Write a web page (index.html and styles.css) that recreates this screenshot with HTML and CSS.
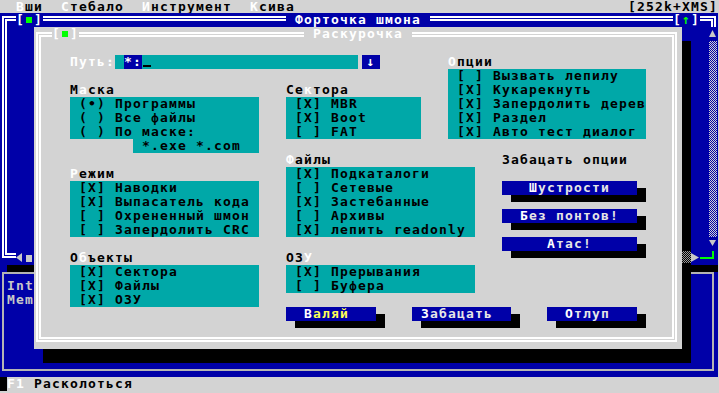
FILE: index.html
```html
<!DOCTYPE html>
<html lang="ru">
<head>
    <meta charset="UTF-8">
    <meta name="viewport" content="width=device-width, initial-scale=1.0">
    <title>Раскурочка</title>
    <link rel="stylesheet" href="styles.css">
</head>
<body>
<div class="screen">
    <div class="menubar">
        <span class="menu-items">  <span class="hot">В</span>ши  <span class="hot">С</span>тебало  <span class="hot">И</span>нструмент  <span class="hot">К</span>сива</span>
        <span class="memory">[252k+XMS]</span>
    </div>

    <div class="log-window">
        <div class="log-frame"></div>
        <div class="log-shadow"></div>
        <div class="log-int">Int</div>
        <div class="log-mem">Mem</div>
    </div>

    <div class="scan-window">
        <div class="frame scan-frame"></div>
        <div class="scan-close">[<span class="box-mark"></span>]</div>
        <div class="scan-title"> Форточка шмона </div>
        <div class="scan-zoom">[<span class="green">↑</span>]</div>
        <div class="vscroll">
            <span class="arrow arrow-up"></span>
            <span class="track"></span>
            <span class="arrow arrow-down"></span>
        </div>
        <div class="hscroll">
            <span class="arrow arrow-left"></span>
            <span class="thumb"></span>
        </div>
        <div class="hscroll-end"><span class="arrow arrow-right"></span></div>
        <div class="grip"></div>
    </div>

    <div class="dialog">
        <div class="frame dialog-frame"></div>
        <div class="dlg-close">[<span class="box-mark"></span>]</div>
        <div class="dlg-title"> Раскурочка </div>

        <div class="label path-label">Путь:</div>
        <div class="input path-input"> <span class="sel">*:</span><span class="cursor"></span></div>
        <div class="history"><span>↓</span></div>

        <div class="label options-label"><span class="hot">О</span>пции</div>
        <div class="cluster options-box">
            <div> [ ] Вызвать лепилу</div>
            <div> [X] Кукарекнуть</div>
            <div> [X] Запердолить дерев</div>
            <div> [X] Раздел</div>
            <div> [X] Авто тест диалог</div>
        </div>

        <div class="label mask-label">М<span class="hot">а</span>ска</div>
        <div class="cluster mask-box">
            <div> (•) Программы</div>
            <div> ( ) Все файлы</div>
            <div> ( ) По маске:</div>
        </div>
        <div class="input mask-input"> *.exe *.com</div>

        <div class="label sectors-label">Се<span class="hot">к</span>тора</div>
        <div class="cluster sectors-box">
            <div> [X] MBR</div>
            <div> [X] Boot</div>
            <div> [ ] FAT</div>
        </div>

        <div class="label files-label"><span class="hot">Ф</span>айлы</div>
        <div class="cluster files-box">
            <div> [X] Подкаталоги</div>
            <div> [ ] Сетевые</div>
            <div> [X] Застебанные</div>
            <div> [ ] Архивы</div>
            <div> [X] лепить readonly</div>
        </div>

        <div class="label extra-label">Забацать опции</div>
        <div class="btn btn-fast">   <span class="hot">Ш</span>устрости</div>
        <div class="btn btn-plain">  <span class="hot">Б</span>ез понтов!</div>
        <div class="btn btn-alarm">     <span class="hot">А</span>тас!</div>

        <div class="label mode-label"><span class="hot">Р</span>ежим</div>
        <div class="cluster mode-box">
            <div> [X] Наводки</div>
            <div> [X] Выпасатель кода</div>
            <div> [ ] Охрененный шмон</div>
            <div> [ ] Запердолить CRC</div>
        </div>

        <div class="label objects-label">О<span class="hot">б</span>ъекты</div>
        <div class="cluster objects-box">
            <div> [X] Сектора</div>
            <div> [X] Файлы</div>
            <div> [X] ОЗУ</div>
        </div>

        <div class="label ram-label">ОЗ<span class="hot">У</span></div>
        <div class="cluster ram-box">
            <div> [X] Прерывания</div>
            <div> [ ] Буфера</div>
        </div>

        <div class="btn btn-default btn-go">  <span class="hot">В</span>аляй</div>
        <div class="btn btn-apply"> <span class="hot">З</span>абацать</div>
        <div class="btn btn-cancel">  <span class="hot">О</span>тлуп</div>
    </div>

    <div class="shade-track"></div>

    <div class="statusbar"><span class="mouse"></span><span class="hot">F1</span> Расколоться</div>
</div>
</body>
</html>
```

FILE: styles.css
```css
body {
    margin: 0;
    background-color: #d3d3d3;
    overflow: hidden;
    font-family: "DejaVu Sans Mono", "Liberation Mono", monospace;
    font-size: 13px;
    font-weight: bold;
    line-height: 14px;
    letter-spacing: 1.17px;
    color: #000;
}
.screen {
    display: grid;
    grid-template-columns: repeat(80, 9px);
    grid-template-rows: 13px repeat(27, 14px);
    margin-left: -2px;
}
.hot {
    color: #fff;
}
.green {
    color: #00ff00;
}

/* top menu */
.menubar {
    grid-area: 1 / 1 / 2 / -1;
    display: flex;
    justify-content: space-between;
    background-color: #d3d3d3;
    line-height: 13px;
}
.menu-items,
.memory {
    white-space: pre;
}

/* window in the back */
.log-window {
    grid-area: 20 / 1 / 28 / -1;
    display: grid;
    grid-template-columns: repeat(80, 9px);
    grid-template-rows: repeat(8, 14px);
    background-color: #0000a8;
    color: #c8c8c8;
}
.log-frame {
    grid-area: 1 / 1 / -1 / -1;
    margin: 7px 4px 6px 4px;
    border: 2px solid #b4b4b4;
}
.log-shadow {
    grid-area: 1 / 2 / 2 / -1;
    height: 7px;
    background-color: #000;
}
.log-int {
    grid-area: 2 / 2 / 3 / 5;
}
.log-mem {
    grid-area: 3 / 2 / 4 / 5;
}

/* blue window */
.scan-window {
    grid-area: 2 / 1 / 20 / -1;
    display: grid;
    grid-template-columns: repeat(80, 9px);
    grid-template-rows: repeat(18, 14px);
    background-color: #0000a8;
    color: #fff;
}
.frame {
    grid-area: 1 / 1 / -1 / -1;
    border: 5px double #fff;
}
.scan-frame {
    margin: 3px 2px 7px 4px;
}
.scan-close,
.scan-title,
.scan-zoom {
    background-color: #0000a8;
    white-space: pre;
}
.scan-close {
    grid-area: 1 / 3 / 2 / 6;
}
.scan-title {
    grid-area: 1 / 33 / 2 / 49;
}
.scan-zoom {
    grid-area: 1 / 76 / 2 / 79;
}
.box-mark {
    display: inline-block;
    width: 9px;
    height: 14px;
    vertical-align: top;
    background: linear-gradient(#00ff00, #00ff00) 1px 4px / 6px 6px no-repeat;
}
.vscroll {
    grid-area: 2 / 80 / 18 / 81;
    display: flex;
    flex-direction: column;
    background-color: #0000a8;
}
.arrow {
    display: block;
    background-color: #c8c8c8;
}
.arrow-up {
    width: 7px;
    height: 7px;
    margin: 3px 0 4px;
    clip-path: polygon(50% 0, 100% 100%, 0 100%);
}
.arrow-down {
    width: 7px;
    height: 6px;
    margin: 3px 0 5px;
    clip-path: polygon(0 0, 100% 0, 50% 100%);
}
.track {
    flex: 1;
    width: 8px;
    background: repeating-conic-gradient(#d3d3d3 0 25%, #0000a8 0 50%) 0 0 / 2px 2px;
}
.hscroll {
    grid-area: 18 / 3 / 19 / 5;
    display: flex;
    align-items: flex-start;
    background-color: #0000a8;
}
.arrow-left {
    width: 6px;
    height: 9px;
    margin: 2px 3px 0 0;
    clip-path: polygon(0 50%, 100% 0, 100% 100%);
}
.thumb {
    width: 6px;
    height: 7px;
    margin: 4px 0 0 1px;
    background-color: #c8c8c8;
}
.hscroll-end {
    grid-area: 18 / 78 / 19 / 79;
    background-color: #0000a8;
}
.arrow-right {
    width: 8px;
    height: 9px;
    margin-top: 2px;
    clip-path: polygon(0 0, 100% 50%, 0 100%);
}
.grip {
    grid-area: 18 / 79 / 19 / 81;
    background-color: #0000a8;
}
.grip::before {
    content: "";
    display: block;
    width: 12px;
    height: 6px;
    border-right: 2px solid #00ff00;
    border-bottom: 2px solid #00ff00;
}
.shade-track {
    grid-area: 19 / 77 / 20 / 78;
    height: 12px;
    background: repeating-conic-gradient(#9a9a9a 0 25%, #000 0 50%) 0 0 / 2px 2px;
}

/* dialog */
.dialog {
    grid-area: 3 / 5 / 26 / 77;
    display: grid;
    grid-template-columns: repeat(72, 9px);
    grid-template-rows: repeat(23, 14px);
    background-color: #d3d3d3;
    box-shadow: 9px 14px 0 #000;
}
.dialog-frame {
    margin: 5px 5px 7px 2px;
}
.dlg-close,
.dlg-title {
    background-color: #d3d3d3;
    color: #fff;
    white-space: pre;
}
.dlg-close {
    grid-area: 1 / 3 / 2 / 6;
}
.dlg-title {
    grid-area: 1 / 31 / 2 / 43;
}
.label {
    white-space: pre;
}
.input {
    background-color: #00a8a8;
    white-space: pre;
}
.sel {
    display: inline-block;
    height: 14px;
    vertical-align: top;
    background-color: #0000a8;
    color: #fff;
}
.cursor {
    display: inline-block;
    width: 9px;
    height: 14px;
    vertical-align: top;
    background: linear-gradient(#000, #000) 1px 10px / 8px 2px no-repeat;
}
.history {
    grid-area: 3 / 37 / 4 / 40;
    padding: 0 5px 0 4px;
}
.history span {
    display: block;
    background-color: #0000a8;
    color: #fff;
    text-align: center;
}
.cluster {
    background-color: #00a8a8;
}
.cluster div {
    height: 14px;
    white-space: pre;
}
.btn {
    background-color: #0000a8;
    color: #e6e6e6;
    white-space: pre;
    box-shadow: 9px 7px 0 #000;
}
.btn-default {
    color: #ffff55;
}

.path-label { grid-area: 3 / 5 / 4 / 10; color: #fff; }
.path-input { grid-area: 3 / 10 / 4 / 37; }
.options-label { grid-area: 3 / 47 / 4 / 52; }
.options-box { grid-area: 4 / 47 / 9 / 69; }
.mask-label { grid-area: 5 / 5 / 6 / 10; }
.mask-box { grid-area: 6 / 5 / 9 / 26; }
.mask-input { grid-area: 9 / 12 / 10 / 26; }
.sectors-label { grid-area: 5 / 29 / 6 / 36; }
.sectors-box { grid-area: 6 / 29 / 9 / 44; }
.files-label { grid-area: 10 / 29 / 11 / 34; }
.files-box { grid-area: 11 / 29 / 16 / 50; }
.extra-label { grid-area: 10 / 53 / 11 / 67; }
.mode-label { grid-area: 11 / 5 / 12 / 10; }
.mode-box { grid-area: 12 / 5 / 16 / 26; }
.objects-label { grid-area: 17 / 5 / 18 / 12; }
.objects-box { grid-area: 18 / 5 / 21 / 26; }
.ram-label { grid-area: 17 / 29 / 18 / 32; }
.ram-box { grid-area: 18 / 29 / 20 / 50; }

.btn-fast { grid-area: 12 / 53 / 13 / 68; }
.btn-plain { grid-area: 14 / 53 / 15 / 68; }
.btn-alarm { grid-area: 16 / 53 / 17 / 68; }
.btn-go { grid-area: 21 / 29 / 22 / 39; }
.btn-apply { grid-area: 21 / 43 / 22 / 54; }
.btn-cancel { grid-area: 21 / 58 / 22 / 68; }

/* status line */
.statusbar {
    grid-area: 28 / 1 / 29 / -1;
    background-color: #d3d3d3;
    white-space: pre;
}
.mouse {
    display: inline-block;
    width: 9px;
    height: 14px;
    vertical-align: top;
    background-color: #000;
}
```
